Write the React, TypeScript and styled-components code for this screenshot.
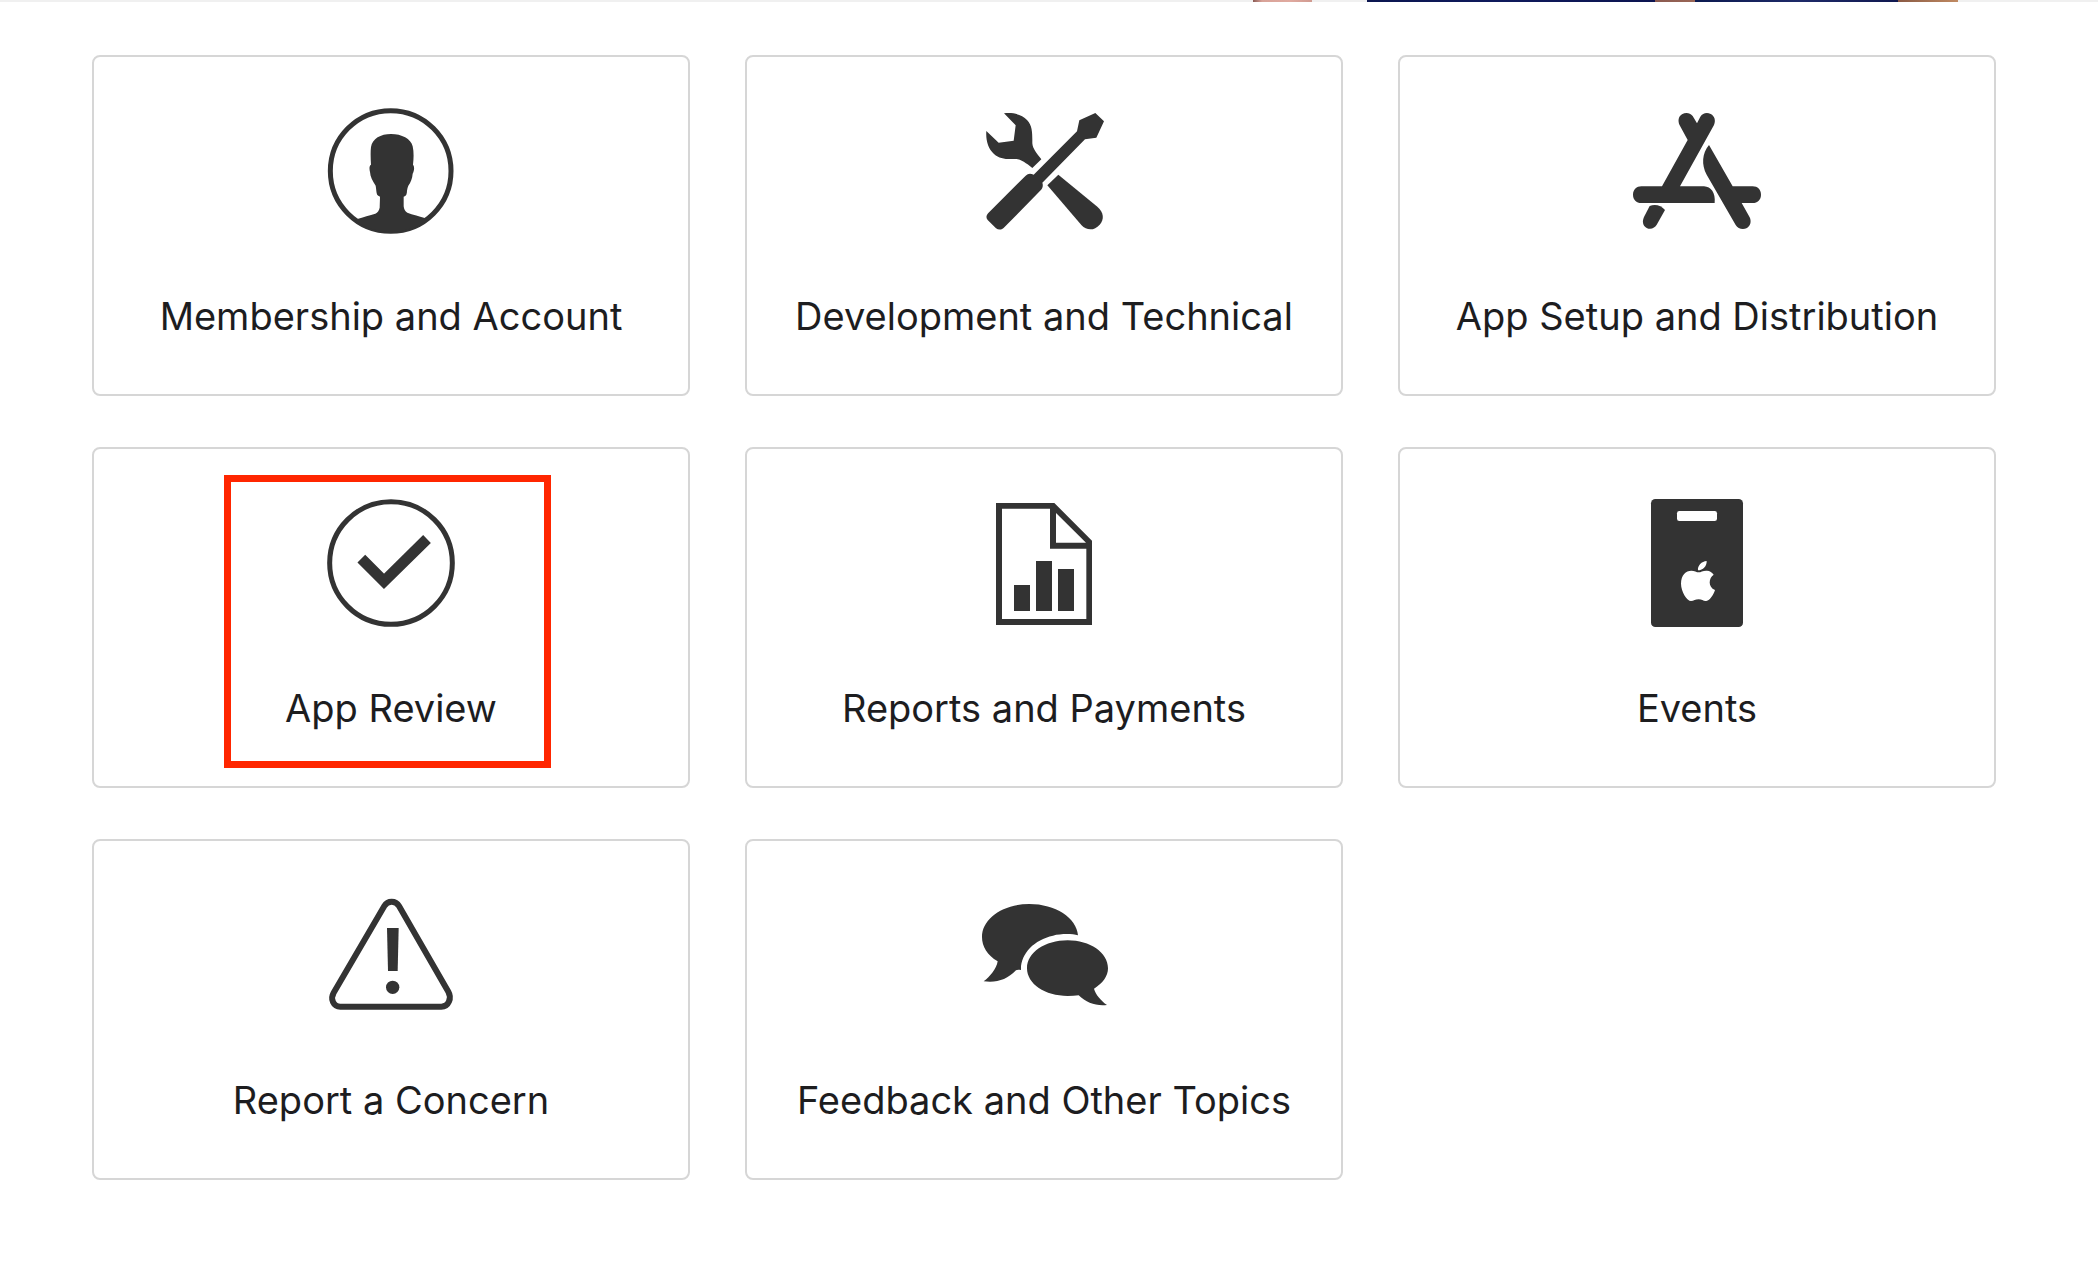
import React from 'react';
import styled, { createGlobalStyle } from 'styled-components';

const GlobalStyle = createGlobalStyle`
  *, *::before, *::after { box-sizing: border-box; }
  body {
    margin: 0;
    background: #fff;
    color: #1d1d1f;
    font-family: Inter, "Liberation Sans", sans-serif;
  }
`;

/* Bottom edge of the hero photograph */
const HeroEdge = styled.div`
  height: 2px;
  background: linear-gradient(
    to right,
    #f0f0f0 1253px,
    #8a5a54 1253px, #d8a298 1262px, #e0aaa0 1290px, #d09a90 1312px,
    #f0f0f0 1312px, #f0f0f0 1367px,
    #0b1650 1367px, #0f1a5c 1500px, #0c1450 1655px,
    #8a5a50 1655px, #9a6656 1695px,
    #0c1a50 1695px, #1e2a68 1800px, #101850 1898px,
    #8a5a44 1898px, #c08a62 1958px,
    #f0f0f0 1958px
  );
`;

const Main = styled.main`
  padding: 53px 102px 100px 92px;
`;

const TopicGrid = styled.ul`
  display: grid;
  grid-template-columns: repeat(3, 1fr);
  gap: 51px 55px;
  margin: 0;
  padding: 0;
  list-style: none;
`;

const TopicItem = styled.li`
  position: relative;
  display: flex;
`;

const TopicCard = styled.a`
  flex: 1;
  display: flex;
  flex-direction: column;
  align-items: center;
  gap: 57px;
  padding: 50px 20px 54px;
  border: 2px solid #d6d6d6;
  border-radius: 8px;
  color: inherit;
  text-decoration: none;
`;

const TopicTitle = styled.span`
  font-size: 38px;
  line-height: 48px;
  white-space: nowrap;
`;

const Highlight = styled.span`
  position: absolute;
  top: 28px;
  bottom: 20px;
  left: 132px;
  right: 139px;
  border: 7px solid #ff2600;
  pointer-events: none;
`;

const Icon = styled.svg`
  display: block;
  width: 128px;
  height: 128px;
  fill: #333;
`;

const AccountIcon = () => (
  <Icon viewBox="51 36 384 384" aria-hidden="true">
    <circle cx="242" cy="228" r="181" fill="none" stroke="#333" strokeWidth="15" />
    <path d="M243 117C212 117 187 131 183 156C181 172 182 192 183 209C177 212 178 223 180 231C181 245 187 257 197 272C199 283 199 297 203 301C205 303 208 303 210 306L209 338C207 347 203 353 196 356C180 361 159 366 142 372L134 376A184 184 0 0 0 351 376L347 370C330 363 307 360 292 353C285 349 282 343 281 334L281 305C289 303 291 296 291 287C292 281 293 276 295 272C302 262 307 250 308 236C313 227 314 214 309 209C311 190 312 172 308 154C303 131 275 117 243 117Z" />
  </Icon>
);

const ToolsIcon = () => (
  <Icon viewBox="30 36 384 384" aria-hidden="true">
    <path d="M102 55C130 52 156 58 171 75C188 93 187 116 187 145C188 161 200 175 214 193L187 219C169 204 151 192 136 192C107 193 89 192 72 177C54 161 47 136 49 108L86 143L131 137L137 91Z" />
    <path d="M376 54L402 79L379 128L345 133L217 263C220 272 218 280 212 286L103 397C96 405 86 406 78 400L53 375C47 368 49 361 55 354L167 242C174 235 181 234 191 239L321 109L328 76Z" />
    <path d="M265 239L382 335C402 352 403 373 389 389C373 407 351 408 334 390L232 271Z" />
  </Icon>
);

const AppStoreIcon = () => (
  <Icon viewBox="39 36 384 384" aria-hidden="true">
    <path d="M126 274L203 135L179 91C173 78 175 65 186 58C197 51 210 53 218 63L231 85L241 65C248 54 261 51 272 57C284 63 288 77 282 90L180 274H252C273 275 287 293 284 324H64C49 324 39 314 39 299C39 284 50 274 64 274Z" />
    <path d="M267 150L338 274H398C413 274 423 284 423 299C423 314 413 324 398 324H365L389 367C395 380 391 393 381 399C368 406 354 401 347 390L260 239C244 210 246 175 267 150Z" />
    <path d="M89 333C105 326 124 331 135 345L111 388C104 400 92 405 80 399C68 392 66 380 72 366Z" />
  </Icon>
);

const ReviewIcon = () => (
  <Icon viewBox="351 102 384 384" aria-hidden="true">
    <circle cx="543" cy="294" r="184" fill="none" stroke="#333" strokeWidth="15" />
    <path d="M454 281L522 349L651 222" fill="none" stroke="#333" strokeWidth="33" />
  </Icon>
);

const ReportsIcon = () => (
  <Icon viewBox="0 27 384 384" aria-hidden="true">
    <path fillRule="evenodd" d="M48 39H223L336 152V405H48ZM66 56V387H319V176H210V56ZM228 69V158H318Z" />
    <path d="M102 285H150V363H102ZM168 213H216V363H168ZM234 237H282V363H234Z" />
  </Icon>
);

const EventsIcon = () => (
  <Icon viewBox="9 27 384 384" aria-hidden="true">
    <rect x="63" y="27" width="276" height="384" rx="13" />
    <rect x="141" y="63" width="120" height="30" rx="7" fill="#fff" />
    <path
      fill="#fff"
      d="M230 213C231 228 219 241 204 241C202 227 215 214 230 213ZM251 254C236 263 233 291 255 300C250 315 240 331 229 333C220 334 216 328 206 328C196 328 191 333 183 333C171 333 153 305 153 281C153 255 168 242 184 242C193 242 200 247 206 247C212 247 220 241 231 242C239 242 247 247 251 254Z"
    />
  </Icon>
);

const ConcernIcon = () => (
  <Icon viewBox="51 33 384 384" aria-hidden="true">
    <path
      d="M223 78C233 61 257 61 267 78L415 335C426 354 416 380 394 380H91C70 380 60 357 71 338Z"
      fill="none"
      stroke="#333"
      strokeWidth="18"
    />
    <path d="M231 144H266L263 273H234Z" />
    <circle cx="248" cy="322" r="20" />
  </Icon>
);

const FeedbackIcon = () => (
  <Icon viewBox="45 18 384 384" aria-hidden="true">
    <path d="M339 151C321 146 288 146 264 152C207 164 166 207 168 255C162 254 157 253 153 256C126 284 96 294 56 289C75 276 95 250 98 229C67 211 51 184 51 156C51 101 113 57 193 57C271 57 335 98 339 151Z" />
    <path d="M308 166C375 166 429 203 429 250C429 274 413 295 387 311C392 329 408 347 426 360C395 364 364 354 341 331C331 332 320 333 308 333C240 333 186 297 186 250C186 203 240 166 308 166Z" />
  </Icon>
);

interface Topic {
  title: string;
  icon: React.ComponentType;
  highlighted?: boolean;
}

const topics: Topic[] = [
  { title: 'Membership and Account', icon: AccountIcon },
  { title: 'Development and Technical', icon: ToolsIcon },
  { title: 'App Setup and Distribution', icon: AppStoreIcon },
  { title: 'App Review', icon: ReviewIcon, highlighted: true },
  { title: 'Reports and Payments', icon: ReportsIcon },
  { title: 'Events', icon: EventsIcon },
  { title: 'Report a Concern', icon: ConcernIcon },
  { title: 'Feedback and Other Topics', icon: FeedbackIcon },
];

export default function App() {
  return (
    <>
      <GlobalStyle />
      <HeroEdge />
      <Main>
        <TopicGrid>
          {topics.map(({ title, icon: TopicIcon, highlighted }) => (
            <TopicItem key={title}>
              <TopicCard href="#">
                <TopicIcon />
                <TopicTitle>{title}</TopicTitle>
              </TopicCard>
              {highlighted && <Highlight />}
            </TopicItem>
          ))}
        </TopicGrid>
      </Main>
    </>
  );
}
